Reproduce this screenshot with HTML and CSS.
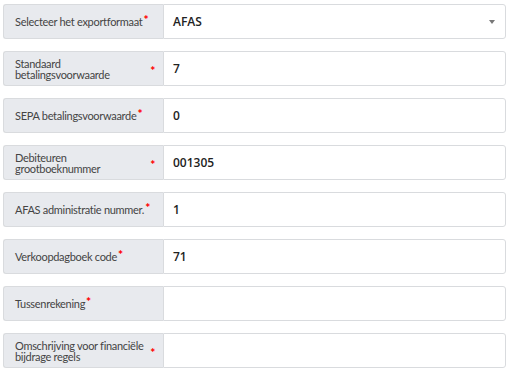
FILE: index.html
```html
<!DOCTYPE html>
<html lang="nl">
<head>
    <meta charset="UTF-8">
    <title>Exportinstellingen</title>
    <link rel="stylesheet" href="styles.css">
</head>
<body>
    <div class="export-form">
        <div class="field">
            <div class="field-label"><span>Selecteer het exportformaat</span><i class="req">*</i></div>
            <div class="field-input select">AFAS<span class="caret"></span></div>
        </div>
        <div class="field">
            <div class="field-label"><span>Standaard betalingsvoorwaarde</span><i class="req mid">*</i></div>
            <div class="field-input">7</div>
        </div>
        <div class="field">
            <div class="field-label"><span>SEPA betalingsvoorwaarde</span><i class="req">*</i></div>
            <div class="field-input">0</div>
        </div>
        <div class="field">
            <div class="field-label"><span>Debiteuren grootboeknummer</span><i class="req mid">*</i></div>
            <div class="field-input">001305</div>
        </div>
        <div class="field">
            <div class="field-label"><span>AFAS administratie nummer.</span><i class="req">*</i></div>
            <div class="field-input">1</div>
        </div>
        <div class="field">
            <div class="field-label"><span>Verkoopdagboek code</span><i class="req">*</i></div>
            <div class="field-input">71</div>
        </div>
        <div class="field">
            <div class="field-label"><span>Tussenrekening</span><i class="req">*</i></div>
            <div class="field-input"></div>
        </div>
        <div class="field">
            <div class="field-label"><span>Omschrijving voor financiële bijdrage regels</span><i class="req mid">*</i></div>
            <div class="field-input"></div>
        </div>
    </div>
</body>
</html>
```

FILE: styles.css
```css
body {
    margin: 0;
    padding: 4px 4px 0 3px;
    background: #fff;
    font-family: 'Lato', 'Noto Sans', sans-serif;
}
.export-form {
    display: flex;
    flex-direction: column;
    gap: 12px;
}
.field {
    display: flex;
    height: 35px;
}
.field-label {
    width: 160px;
    box-sizing: border-box;
    display: flex;
    align-items: center;
    padding: 0 8px 0 11px;
    background: #e8eaee;
    border: 1px solid #d9dbde;
    border-right: none;
    border-radius: 3px 0 0 3px;
    font-size: 11px;
    letter-spacing: -0.3px;
    line-height: 11px;
    color: #444;
}
.req {
    font-style: normal;
    font-weight: 900;
    color: #f00;
    font-size: 12px;
    align-self: center;
    margin-top: -5px;
    margin-left: 1px;
}
.req.mid {
    margin-top: 3px;
    margin-left: 4px;
}
.field-input {
    flex: 1;
    display: flex;
    align-items: center;
    padding: 0 9px;
    border: 1px solid #d9dbde;
    border-radius: 0 3px 3px 0;
    font-family: 'Open Sans', sans-serif;
    font-size: 12px;
    font-weight: 600;
    color: #222;
}
.select {
    justify-content: space-between;
}
.caret {
    width: 0;
    height: 0;
    border-left: 3px solid transparent;
    border-right: 3px solid transparent;
    border-top: 4px solid #777;
    margin-right: 1px;
}
```
